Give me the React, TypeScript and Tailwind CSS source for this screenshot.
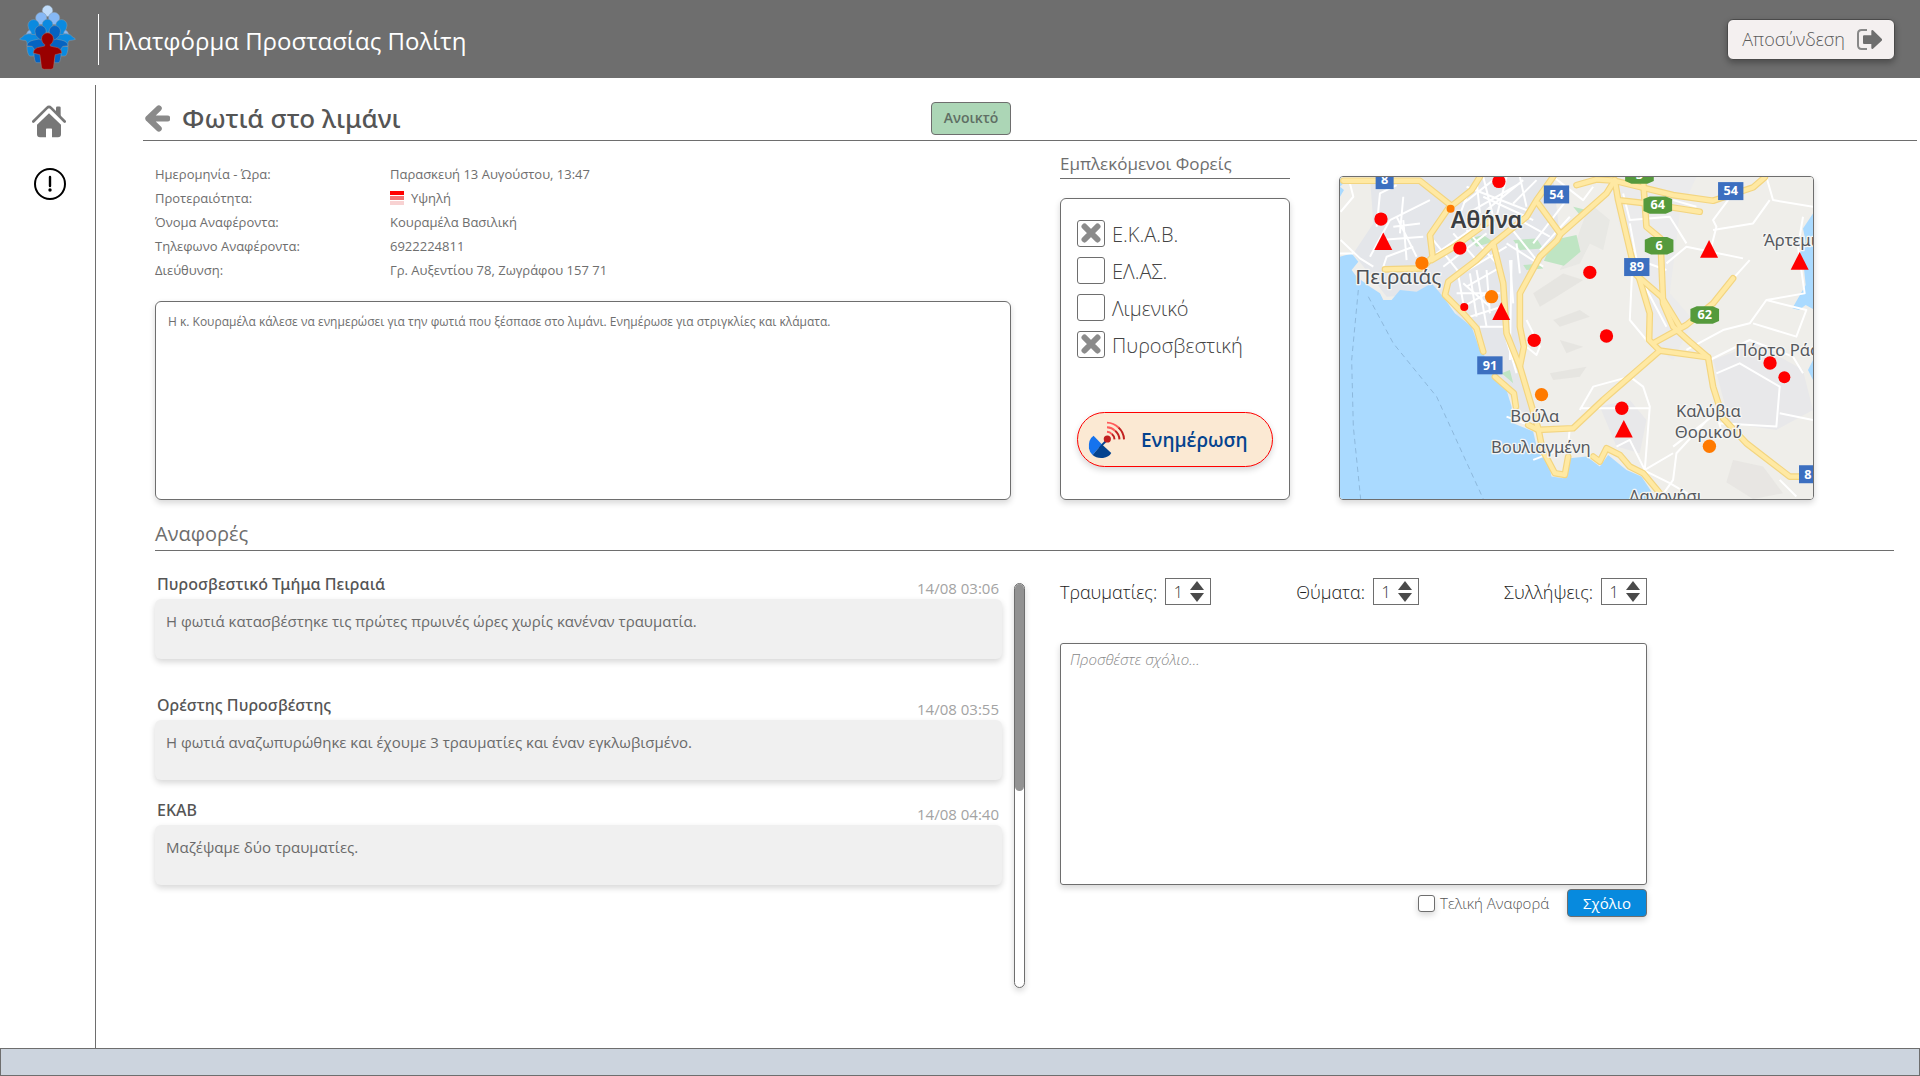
import { useState } from "react";

function Logo() {
  return (
    <svg viewBox="18 20 172 194" className="mb-1 h-[65px] w-[57px]" aria-hidden="true">
      <g stroke="#8a9aa8" strokeWidth="1.500">
        <path d="M40 107q4-12 14-14l14 12zM168 107q-4-12-14-14l-14 12z" fill="#86b8f5" />
        <path d="M88 36a16 16 0 0 1 32 0q0 10-10 18H98q-10-8-10-18z" fill="#c0dcfa" />
        <path d="M68 58a17 17 0 0 1 34 0q0 10-10 20H78q-10-10-10-20zM107 58a17 17 0 0 1 34 0q0 10-10 20h-14q-10-10-10-20z" fill="#86b8f5" />
        <path d="M20 123q-1-4 6-6 8-10 20-11h34v30l-38 8q2-14-4-18-8 0-18-3zM188 123q1-4-6-6-8-10-20-11h-34v30l38 8q-2-14 4-18 8 0 18-3z" fill="#0a8ae0" />
        <path d="M42 144h22v29H50q-8-8-8-29zM166 144h-22v29h14q8-8 8-29z" fill="#0a8ae0" />
        <path d="M45 80a17 17 0 0 1 34 0q0 12-9 20l-2 8H56l-2-8q-9-8-9-20zM129 80a17 17 0 0 1 34 0q0 12-9 20l-2 8h-12l-2-8q-9-8-9-20z" fill="#0a8ae0" />
        <path d="M88 78a16 16 0 0 1 32 0q0 12-16 26-16-14-16-26z" fill="#0a8ae0" />
        <path d="M42 142q2-14 20-17l24-5 18 14 18-14 24 5q18 3 20 17l-16 2-14 20H72l-14-20z" fill="#0563c1" />
        <path d="M66 98a17 17 0 0 1 34 0q0 14-10 21l-7 5-7-5Q66 112 66 98zM109 98a17 17 0 0 1 34 0q0 14-10 21l-7 5-7-5q-10-7-10-21z" fill="#0563c1" />
        <path d="M63 164h20v29H70q-6-4-7-29zM145 164h-20v29h13q6-4 7-29z" fill="#0563c1" />
      </g>
      <g fill="#990000" stroke="#a8776f" strokeWidth="1.500">
        <path d="M61 164q2-16 20-18l14-3 1-4q-10-7-10-18a18 18 0 0 1 36 0q0 11-10 18l1 4 14 3q18 2 20 18l-20 5-5 38q-1 6-8 6H94q-7 0-8-6l-5-38z" />
      </g>
    </svg>
  );
}

function LogoutIcon() {
  return (
    <svg viewBox="0 0 75 63" className="h-[21px] w-[25px]" aria-hidden="true">
      <path d="M30 3H14Q3 3 3 14v35q0 11 11 11h16" fill="none" stroke="#888" strokeWidth="6" />
      <path d="M21 19q-3 0-3 3v20q0 3 3 3h22v12q1 5 5 2l26-24q3-3 0-6L48 4q-4-3-5 2v13z" fill="#6e6e6e" />
    </svg>
  );
}

function HomeIcon() {
  return (
    <svg viewBox="0 0 102 98" className="h-[33px] w-[34px]" aria-hidden="true">
      <path d="M72 8q0-4 4-4h6q4 0 4 4v28L72 23z" fill="#777" />
      <path d="M4 49L45 8q6-6 12 0l41 41" fill="none" stroke="#777" strokeWidth="8" strokeLinecap="round" />
      <path d="M51 24L15 59v28q0 9 9 9h18V72q0-2 2-2h14q2 0 2 2v24h18q9 0 9-9V59z" fill="#777" />
    </svg>
  );
}

function AlertIcon() {
  return (
    <svg viewBox="0 0 32 32" className="size-8" aria-hidden="true">
      <circle cx="16" cy="16" r="15" fill="none" stroke="#000" strokeWidth="2" />
      <path d="M16 9v9" stroke="#000" strokeWidth="2.4" strokeLinecap="round" />
      <circle cx="16" cy="22" r="1.7" />
    </svg>
  );
}

function BackIcon() {
  return (
    <svg viewBox="0 0 76 80" className="h-[27px] w-[25px]" aria-hidden="true">
      <path d="M10 40h58M42 9L10 40l32 31" fill="none" stroke="#8a8a8a" strokeWidth="18" strokeLinecap="round" strokeLinejoin="round" />
    </svg>
  );
}

function DishIcon() {
  return (
    <svg viewBox="46 34 116 116" className="size-[38px]" aria-hidden="true">
      <path d="M80 116L104 92" stroke="#04438f" strokeWidth="6" fill="none" />
      <path d="M63 79Q46 90 49 118q2 12 11 20l28-33z" fill="#1573ee" />
      <path d="M60 138q12 11 32 9 18-2 25-15L88 105z" fill="#04438f" />
      <circle cx="105" cy="89" r="11" fill="#c1201f" />
      <g fill="none" strokeWidth="6">
        <path d="M104 67a23 23 0 0 1 15 7M104 53a37 37 0 0 1 25 11M104 39a51 51 0 0 1 35 15" stroke="#ff5a5a" />
        <path d="M119 74a23 23 0 0 1 8 16M129 64a37 37 0 0 1 13 26M139 54a51 51 0 0 1 17 36" stroke="#c1201f" />
      </g>
    </svg>
  );
}

const circles: [number, number, number, string][] = [
  [537, 64, 20, "#f00"], [183, 177, 20, "#f00"], [420, 264, 20, "#f00"], [810, 337, 20, "#f00"],
  [643, 541, 20, "#f00"], [860, 528, 20, "#f00"], [1351, 609, 20, "#f00"], [1394, 652, 18, "#f00"],
  [906, 745, 20, "#f00"], [433, 441, 12, "#f00"], [392, 146, 12, "#ff7a00"], [306, 309, 20, "#ff7a00"],
  [515, 410, 20, "#ff7a00"], [665, 704, 20, "#ff7a00"], [1169, 859, 20, "#ff7a00"],
];
const triangles: [number, number][] = [[190, 244], [544, 454], [1168, 267], [1440, 303], [912, 807]];
const blueSigns: [number, number, string][] = [
  [194, 60, "8"], [710, 103, "54"], [1233, 93, "54"], [951, 321, "89"], [510, 616, "91"], [1465, 943, "8"],
];
const greenSigns: [number, number, string][] = [[959, 45, "3"], [1014, 135, "64"], [1018, 257, "6"], [1155, 465, "62"]];
const places: [number, number, string, number, string][] = [
  [500, 205, "Αθήνα", 70, "#3b3e42"], [235, 373, "Πειραιάς", 62, "#4d5156"],
  [645, 785, "Βούλα", 50, "#55595e"], [663, 880, "Βουλιαγμένη", 50, "#55595e"],
  [1166, 770, "Καλύβια", 50, "#55595e"], [1166, 834, "Θορικού", 50, "#55595e"],
  [1038, 1027, "Λαγονήσι", 50, "#55595e"],
];
const roads = [
  "M70 62H300L392 135L330 225L338 290L306 325L195 328",
  "M480 50L455 90L392 140M335 300L400 262L520 175",
  "M700 50L650 120L620 170L520 250L470 300L385 365L375 405L430 460L470 505L490 575",
  "M655 130L722 222M885 60L860 100L722 222L712 240L660 290L600 400L600 500L612 560L600 620",
  "M520 250L550 370L560 520L600 620L655 805L668 870L705 940L735 945L745 890",
  "M525 650L582 700L588 740M770 75L830 58L885 62L1060 105L1180 122L1300 82L1335 52",
  "M885 60L895 120L980 130L1140 155M895 120L935 290L960 360L990 460L988 540L1020 572L1165 592",
  "M970 60L980 200L1022 235L1030 430L1060 500L1110 545L1165 592L1180 680L1210 775L1280 850L1410 950H1450",
  "M950 345L1025 410L1080 500M1000 550L1100 495L1180 430L1240 355",
  "M1020 572L850 720L760 805L655 810L625 795M820 890L840 905L860 865L900 885L930 920L970 940L1020 1000",
];
const streets = [
  "M62 155L100 110 90 70M62 240L120 295 160 320M100 280H60M170 200L180 100 230 75M240 220L250 110M150 290L210 180M210 180L330 120M190 320L200 290 280 260M250 180L260 300M180 240L310 230M220 200L300 190M230 170L290 290",
  "M430 130L520 60M440 80L620 150M490 50L520 170M560 50L530 170M610 60L500 150M460 150L600 70M580 130L650 60M410 190L440 110M490 110L640 180M470 60L480 160M600 50L620 140",
  "M350 280L480 190M370 320L500 220M410 350L560 260M440 380L545 320M340 240L420 340M400 220L470 300M440 210L530 310M560 250L670 320M570 200L650 300M600 180L690 230M570 300L580 430M590 250L600 340",
  "M415 345L430 430M410 400H540M430 370L510 440M450 340L470 470M470 330L500 500M430 440L500 400M450 470L545 440M480 500H560M500 330L510 460M560 540L590 640M575 300L570 600",
  "M620 480L660 560 650 585 620 560M780 750L820 680 930 650 970 680 990 740 975 930 930 840 890 860M780 745L990 745M700 50L790 120 820 80M750 170L660 270M740 120L640 250",
  "M910 100L930 180 1050 170 1100 250M930 190L960 350 1040 500M1040 310L1100 260 1270 295M1170 280L1190 200 1180 180 1240 100M1060 120L1130 140M1340 50L1360 120 1480 140M1350 120L1300 190 1180 210",
  "M1450 170L1435 260 1455 400 1340 420 1290 490 1210 510 1100 570M1340 420L1460 450 1430 530 1300 490M1170 600L1290 540 1420 590 1450 640M1190 640L1260 610 1380 680 1370 800 1200 790M1190 750L1070 880 1060 960 1020 1017M1210 830L1190 760 1060 860M970 930L1050 970 1130 1017M975 930L1060 880M1380 760L1480 780M1380 960L1430 1010",
  "M560 770L640 800M750 800L745 860 640 900M940 270L930 480 980 540 1000 550M930 290L1040 330M1290 300L1200 400",
];

function IncidentMap() {
  return (
    <svg
      viewBox="60 50 1420 968"
      preserveAspectRatio="xMidYMid slice"
      className="block size-full font-['Noto_Sans','Open_Sans',sans-serif]"
      role="img"
      aria-label="Χάρτης συμβάντων Αττικής"
    >
      <rect x="60" y="50" width="1420" height="968" fill="#efeeea" />
      <path d="M150 50H700L720 230 600 400 600 620 655 800 590 740 480 570 370 400 200 410 100 280 160 190z" fill="#e4e6ea" />
      <path d="M870 50H1130L1080 160 1050 400 1120 480 1060 600 1000 560 960 380 900 200z" fill="#ebebec" />
      <path d="M1180 600l130-50 140 80 30 120-110 60-140-20zM840 740l90-20 50 60-20 100-70-20z" fill="#e8e8ea" />
      <g fill="#e2e1dd">
        <path d="M810 130l60 50-20 90-40-20-30 60-60 20 50-90z" opacity=".5" />
        <path d="M640 400l90-60 60 20-80 50-50 30zM700 480l80-30 30 20-90 30zM720 540l70 20-50 20zM690 640l110-20-20 30-80 10z" opacity=".7" />
        <path d="M1240 900l90 20 60 80-90 17-80-50z" opacity=".6" />
      </g>
      <g fill="#bfe5c3">
        <path d="M700 240l70-15 12 50-50 42-60-15zM580 240l70-5 20 30-70 5zM610 315l50-5 10 15-50 5zM450 235l40-10 30 20-50 15zM760 140l40 10-20 15z" />
        <path d="M545 640l25-10 10 40zM640 935l20 0-5 25z" />
      </g>
      <path d="M60 290L95 280 115 305 95 330 110 350 150 380 180 400 190 420 215 420 240 390 290 395 335 370 370 410 405 460 455 500 480 570 520 620 560 690 575 740 580 790 640 815 655 880 685 900 695 950 730 955 750 895 800 890 840 920 865 885 920 930 965 950 1010 1018H60z" fill="#aadaff" />
      <path d="M60 80l20-20-20-10zM60 80l12 10-12 20zM1480 160l-30 45 8 40-20 40 15 40 5 50-40 70 20 5 20-15 22 12zM1480 600l-15 30 15 30z" fill="#aadaff" />
      <path d="M115 390L95 600 100 800 122 1017M145 410L220 550 350 710 490 1017" fill="none" stroke="#8db8dc" strokeWidth="3" strokeDasharray="16 12" />
      <g fill="none" stroke="#fff" strokeWidth="6" strokeLinejoin="round">
        {streets.map((d) => <path key={d} d={d} />)}
      </g>
      <g fill="none" stroke="#f3d580" strokeWidth="20" strokeLinejoin="round" strokeLinecap="round">
        {roads.map((d) => <path key={d} d={d} />)}
      </g>
      <g fill="none" stroke="#ffe9a3" strokeWidth="13" strokeLinejoin="round" strokeLinecap="round">
        {roads.map((d) => <path key={d} d={d} />)}
      </g>
      <g textAnchor="middle" fontSize="38" fontWeight="700" fill="#fff">
        {blueSigns.map(([x, y, label]) => (
          <g key={`${x}-${y}`}>
            <rect x={x - (label.length > 1 ? 38 : 27)} y={y - 27} width={label.length > 1 ? 76 : 54} height="54" fill="#3c6fc0" />
            <text x={x} y={y + 13}>{label}</text>
          </g>
        ))}
        {greenSigns.map(([x, y, label]) => (
          <g key={`${x}-${y}`}>
            <path d={`M${x - 43} ${y - 18}L${x - 24} ${y - 26}H${x + 24}L${x + 43} ${y - 18}V${y + 18}L${x + 24} ${y + 26}H${x - 24}L${x - 43} ${y + 18}Z`} fill="#559a3c" />
            <text x={x} y={y + 13}>{label}</text>
          </g>
        ))}
      </g>
      <g textAnchor="middle" stroke="#f5f5f3" strokeWidth="8" paintOrder="stroke" strokeLinejoin="round">
        {places.map(([x, y, name, size, color]) => (
          <text key={name} x={x} y={y} fontSize={size} fill={color} fontWeight={name === "Αθήνα" ? 600 : 400}>{name}</text>
        ))}
        <text x="1330" y="259" fontSize="50" fill="#55595e" textAnchor="start">Άρτεμις</text>
        <text x="1247" y="588" fontSize="50" fill="#55595e" textAnchor="start">Πόρτο Ράφτη</text>
      </g>
      {circles.map(([x, y, r, fill]) => <circle key={`${x}-${y}`} cx={x} cy={y} r={r} fill={fill} />)}
      {triangles.map(([x, y]) => <path key={`${x}-${y}`} d={`M${x} ${y - 27}l27 53h-54z`} fill="#f00" />)}
    </svg>
  );
}

function AgencyOption({ label, initial }: { label: string; initial?: boolean }) {
  return (
    <label className="flex h-[37px] items-start gap-[7px] text-xl font-light text-[#444]">
      <span className="relative h-[27px] w-7 shrink-0">
        <input
          type="checkbox"
          defaultChecked={initial}
          className="peer block size-full appearance-none rounded-[3px] border border-[#6e6e6e] bg-white"
        />
        <svg viewBox="0 0 20 20" className="pointer-events-none absolute top-[3px] left-1 hidden size-5 peer-checked:block" aria-hidden="true">
          <path d="M3.500 3.500l13 13M16.500 3.500l-13 13" stroke="#8b8b8b" strokeWidth="6" strokeLinecap="round" />
        </svg>
      </span>
      <span className="pt-px leading-7">{label}</span>
    </label>
  );
}

function Stepper({ id, label }: { id: string; label: string }) {
  const [value, setValue] = useState(1);
  return (
    <div className="flex items-center gap-2">
      <label htmlFor={id} className="text-lg leading-6 font-light text-[#222]">{label}</label>
      <div className="flex h-[27px] w-[46px] items-center border border-[#6e6e6e] bg-white">
        <input
          id={id}
          type="number"
          value={value}
          onChange={(e) => setValue(Number(e.target.value))}
          className="w-6 appearance-none bg-transparent text-center text-base leading-6 font-light text-[#333] [-moz-appearance:textfield] [&::-webkit-inner-spin-button]:appearance-none"
        />
        <span className="flex flex-col gap-[3px]">
          <button type="button" aria-label={`Αύξηση: ${label}`} onClick={() => setValue(value + 1)}>
            <svg viewBox="0 0 14 9" className="block h-[9px] w-[14px]"><path d="M7 0l7 9H0z" fill="#4a4a4a" /></svg>
          </button>
          <button type="button" aria-label={`Μείωση: ${label}`} onClick={() => setValue(Math.max(0, value - 1))}>
            <svg viewBox="0 0 14 9" className="block h-[9px] w-[14px]"><path d="M7 9L0 0h14z" fill="#4a4a4a" /></svg>
          </button>
        </span>
      </div>
    </div>
  );
}

const shadow = "shadow-[0_3px_6px_rgba(0,0,0,0.16)]";

function Report({ author, time, text }: { author: string; time: string; text: string }) {
  return (
    <article>
      <header className="flex h-7 items-start justify-between pr-[3px] pl-0.5">
        <h3 className="font-['Noto_Sans'] text-base leading-[26px] font-medium text-[#555]">{author}</h3>
        <time className="pt-[5px] text-[15px] leading-6 text-[#a3a3a3]">{time}</time>
      </header>
      <p className={`h-[60px] rounded-md bg-[#f0f0f0] px-[11px] py-2.5 text-[15px] leading-6 text-[#6a6a6a] ${shadow}`}>{text}</p>
    </article>
  );
}

const details: [string, string][] = [
  ["Ημερομηνία - Ώρα:", "Παρασκευή 13 Αυγούστου, 13:47"],
  ["Προτεραιότητα:", "Υψηλή"],
  ["Όνομα Αναφέροντα:", "Κουραμέλα Βασιλική"],
  ["Τηλεφωνο Αναφέροντα:", "6922224811"],
  ["Διεύθυνση:", "Γρ. Αυξεντίου 78, Ζωγράφου 157 71"],
];

export default function App() {
  return (
    <div className="flex min-h-screen flex-col bg-white font-['Open_Sans','Noto_Sans',sans-serif] text-[#6e6e6e]">
      <header className="flex h-[78px] items-center bg-[#6e6e6e] pr-[25px] pl-[19px]">
        <Logo />
        <span className="ml-[22px] h-[51px] w-px bg-white" />
        <h1 className="ml-2 pt-1 text-2xl leading-8 text-white">Πλατφόρμα Προστασίας Πολίτη</h1>
        <button type="button" className="ml-auto flex h-[41px] items-center gap-3 rounded-md border border-[#4a4a4a] bg-[#f4f0f0] pr-3 pl-3.5 text-lg font-light text-[#5a5a5a] shadow-[0_3px_6px_rgba(0,0,0,0.3)]">
          Αποσύνδεση
          <LogoutIcon />
        </button>
      </header>

      <div className="flex flex-1">
        <nav className="mt-[7px] flex w-24 shrink-0 flex-col items-center gap-[30px] border-r border-[#6e6e6e] pt-5 pl-0.5">
          <a href="#home" aria-label="Αρχική"><HomeIcon /></a>
          <a href="#alerts" aria-label="Συμβάντα" className="ml-0.5"><AlertIcon /></a>
        </nav>

        <main className="min-w-0 flex-1 pl-[47px]">
          <div className="mr-[3px] grid h-[63px] grid-cols-[868fr_906fr] border-b border-[#6e6e6e]">
            <div className="flex items-center gap-3 pt-[18px]">
              <a href="#back" aria-label="Πίσω" className="pl-0.5"><BackIcon /></a>
              <h2 className="font-['Noto_Sans'] text-[26px] leading-9 font-medium text-[#555]">Φωτιά στο λιμάνι</h2>
              <span className="ml-auto flex h-[33px] w-20 items-center justify-center rounded border border-[#6e6e6e] bg-[#acd6b6] text-sm font-semibold text-[#5f6f64]">Ανοικτό</span>
            </div>
          </div>

          <section className="ml-3 grid h-[359px] grid-cols-[856fr_230fr_475fr] gap-x-[49px] pr-[106px]">
            <div className="flex flex-col">
              <dl className="mt-[21px] grid h-[139px] grid-cols-[235px_1fr] content-start text-[13px] leading-6">
                {details.map(([term, value]) => (
                  <div key={term} className="contents">
                    <dt>{term}</dt>
                    <dd className="flex items-center gap-[7px]">
                      {term === "Προτεραιότητα:" && (
                        <span className="flex w-[14px] flex-col gap-px" aria-hidden="true">
                          <span className="h-1 bg-[#f00]" />
                          <span className="h-1 bg-[#f47272]" />
                          <span className="h-1 bg-[#f8d2d2]" />
                        </span>
                      )}
                      {value}
                    </dd>
                  </div>
                ))}
              </dl>
              <div className={`flex-1 rounded-md border border-[#6e6e6e] px-3 py-2.5 text-xs leading-5 ${shadow}`}>
                Η κ. Κουραμέλα κάλεσε να ενημερώσει για την φωτιά που ξέσπασε στο λιμάνι. Ενημέρωσε για στριγκλίες και κλάματα.
              </div>
            </div>

            <div className="flex flex-col">
              <h3 className="mb-[19px] h-[38px] border-b border-[#6e6e6e] pt-[11px] text-[17px] leading-6">Εμπλεκόμενοι Φορείς</h3>
              <form className={`flex flex-1 flex-col rounded-md border border-[#6e6e6e] px-4 pt-[21px] ${shadow}`} onSubmit={(e) => e.preventDefault()}>
                <AgencyOption label="Ε.Κ.Α.Β." initial />
                <AgencyOption label="ΕΛ.ΑΣ." />
                <AgencyOption label="Λιμενικό" />
                <AgencyOption label="Πυροσβεστική" initial />
                <button type="submit" className={`mt-auto mb-8 flex h-[55px] items-center gap-[15px] rounded-full border border-[#f00] bg-[#fbe9d3] pl-2.5 text-[19px] leading-6 font-semibold text-[#04438f] ${shadow}`}>
                  <DishIcon />
                  Ενημέρωση
                </button>
              </form>
            </div>

            <div className={`mt-[35px] overflow-hidden rounded-[4px] border border-[#6e6e6e] ${shadow}`}>
              <IncidentMap />
            </div>
          </section>

          <h2 className="mt-[18px] mr-[26px] ml-3 h-[33px] border-b border-[#6e6e6e] pt-0.5 text-xl leading-7">Αναφορές</h2>

          <section className="mr-[273px] ml-3 grid grid-cols-[870fr_587fr] gap-x-[35px] pt-8">
            <div className="flex h-[405px] gap-3">
              <div id="reports" className="-mt-[12px] flex-1">
                <Report author="Πυροσβεστικό Τμήμα Πειραιά" time="14/08 03:06" text="Η φωτιά κατασβέστηκε τις πρώτες πρωινές ώρες χωρίς κανέναν τραυματία." />
                <div className="mt-[33px]">
                  <Report author="Ορέστης Πυροσβέστης" time="14/08 03:55" text="Η φωτιά αναζωπυρώθηκε και έχουμε 3 τραυματίες και έναν εγκλωβισμένο." />
                </div>
                <div className="mt-[17px]">
                  <Report author="ΕΚΑΒ" time="14/08 04:40" text="Μαζέψαμε δύο τραυματίες." />
                </div>
              </div>
              <div role="scrollbar" aria-label="Κύλιση αναφορών" aria-controls="reports" aria-valuenow={0} className={`w-[11px] rounded-full border border-[#6e6e6e] bg-white ${shadow}`}>
                <div className="h-[207px] rounded-full bg-[#929292]" />
              </div>
            </div>

            <form className="flex flex-col" onSubmit={(e) => e.preventDefault()}>
              <div className="-mt-[5px] flex items-center justify-between">
                <Stepper id="injured" label="Τραυματίες:" />
                <Stepper id="victims" label="Θύματα:" />
                <Stepper id="arrests" label="Συλλήψεις:" />
              </div>
              <textarea
                aria-label="Σχόλιο"
                placeholder="Προσθέστε σχόλιο..."
                className={`mt-[38px] h-[242px] w-full resize-none rounded-[3px] border border-[#6e6e6e] px-[9px] py-[3px] text-[15px] leading-6 font-light placeholder:text-[#888] placeholder:italic ${shadow}`}
              />
              <div className="mt-1 flex items-center justify-end">
                <label className="flex items-center gap-[5px] text-[15px] leading-6 font-light text-[#555]">
                  <input type="checkbox" className={`size-[17px] appearance-none rounded-[3px] border border-[#6e6e6e] bg-white checked:bg-[#8b8b8b] ${shadow}`} />
                  Τελική Αναφορά
                </label>
                <button type="submit" className={`ml-[18px] h-7 w-20 rounded border border-[#6e6e6e] bg-[#078ade] text-[15px] leading-6 text-white ${shadow}`}>Σχόλιο</button>
              </div>
            </form>
          </section>
        </main>
      </div>

      <footer className="h-7 border border-[#6e6e6e] bg-[#ccd4de]" />
    </div>
  );
}
